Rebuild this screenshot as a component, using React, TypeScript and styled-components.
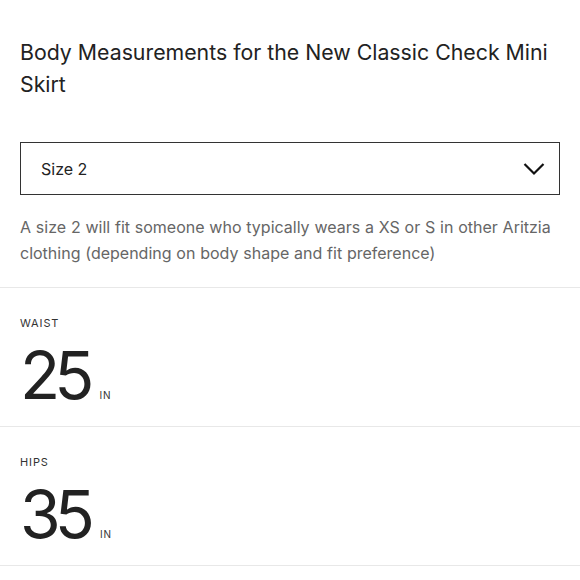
import React from 'react';
import styled, { createGlobalStyle } from 'styled-components';

const GlobalStyle = createGlobalStyle`
  body {
    margin: 0;
    background: #fff;
    font-family: 'Inter', 'Liberation Sans', sans-serif;
    color: #222;
  }
`;

const Page = styled.div`
  padding-top: 36px;
`;

const Inner = styled.div`
  padding: 0 20px;
`;

const Title = styled.h1`
  margin: 0;
  font-size: 21.3px;
  line-height: 32px;
  font-weight: 400;
  color: #222;
`;

const Select = styled.div`
  margin-top: 42px;
  height: 53px;
  box-sizing: border-box;
  border: 1.5px solid #333;
  display: flex;
  align-items: center;
  justify-content: space-between;
  padding: 0 14px 0 20px;
  font-size: 16px;
  color: #222;
`;

const Note = styled.p`
  margin: 19px 0 21px;
  font-size: 16px;
  line-height: 26px;
  word-spacing: 0.3px;
  color: #666;
`;

const List = styled.div`
  border-bottom: 1.5px solid #e8e8e8;
`;

const Section = styled.section`
  border-top: 1.5px solid #e8e8e8;
  padding: 27px 20px 18px;
`;

const Label = styled.div`
  font-size: 11px;
  line-height: 16px;
  letter-spacing: 0.08em;
  text-transform: uppercase;
  color: #333;
`;

const ValueRow = styled.div`
  margin-top: 11px;
  display: flex;
  align-items: baseline;
`;

const Value = styled.span`
  font-size: 66px;
  line-height: 1;
  color: #222;
  letter-spacing: -0.09em;
`;

const Unit = styled.span`
  margin-left: 11px;
  font-size: 10px;
  letter-spacing: 0.08em;
  color: #333;
`;

const Chevron = () => (
  <svg width="22" height="14" viewBox="0 0 22 14" fill="none">
    <path d="M1.5 2 L11 11.5 L20.5 2" stroke="#111" strokeWidth="2.2" />
  </svg>
);

const measurements = [
  { label: 'Waist', value: 25 },
  { label: 'Hips', value: 35 },
];

export default function App() {
  return (
    <Page>
      <GlobalStyle />
      <Inner>
        <Title>Body Measurements for the New Classic Check Mini Skirt</Title>
        <Select>
          <span>Size 2</span>
          <Chevron />
        </Select>
        <Note>
          A size 2 will fit someone who typically wears a XS or S in other Aritzia clothing
          (depending on body shape and fit preference)
        </Note>
      </Inner>
      <List>
        {measurements.map((m) => (
          <Section key={m.label}>
            <Label>{m.label}</Label>
            <ValueRow>
              <Value>{m.value}</Value>
              <Unit>IN</Unit>
            </ValueRow>
          </Section>
        ))}
      </List>
    </Page>
  );
}
